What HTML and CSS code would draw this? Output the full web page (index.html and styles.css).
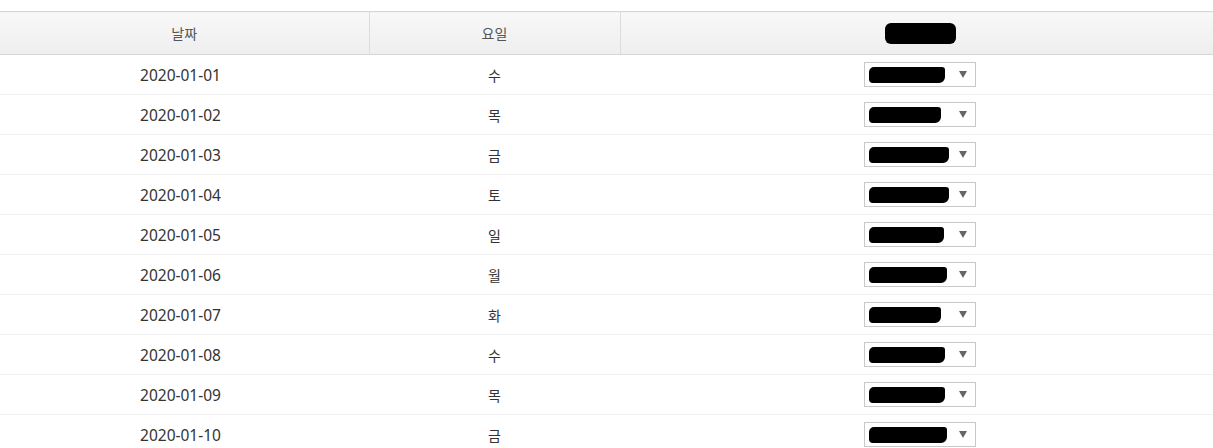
FILE: index.html
```html
<!DOCTYPE html>
<html lang="ko">
<head>
<meta charset="utf-8">
<link rel="stylesheet" href="styles.css">
</head>
<body>
<div class="wrap">
<table class="grid">
  <colgroup>
    <col class="c1"><col class="c2"><col class="c3">
  </colgroup>
  <thead>
    <tr>
      <th>날짜</th>
      <th>요일</th>
      <th><span class="redact head-redact"></span></th>
    </tr>
  </thead>
  <tbody>
    <tr><td class="date">2020-01-01</td><td>수</td><td><div class="sel"><span class="redact" style="width:76px"></span><span class="arrow"></span></div></td></tr>
    <tr><td class="date">2020-01-02</td><td>목</td><td><div class="sel"><span class="redact" style="width:72px"></span><span class="arrow"></span></div></td></tr>
    <tr><td class="date">2020-01-03</td><td>금</td><td><div class="sel"><span class="redact" style="width:80px"></span><span class="arrow"></span></div></td></tr>
    <tr><td class="date">2020-01-04</td><td>토</td><td><div class="sel"><span class="redact" style="width:80px"></span><span class="arrow"></span></div></td></tr>
    <tr><td class="date">2020-01-05</td><td>일</td><td><div class="sel"><span class="redact" style="width:75px"></span><span class="arrow"></span></div></td></tr>
    <tr><td class="date">2020-01-06</td><td>월</td><td><div class="sel"><span class="redact" style="width:78px"></span><span class="arrow"></span></div></td></tr>
    <tr><td class="date">2020-01-07</td><td>화</td><td><div class="sel"><span class="redact" style="width:72px"></span><span class="arrow"></span></div></td></tr>
    <tr><td class="date">2020-01-08</td><td>수</td><td><div class="sel"><span class="redact" style="width:76px"></span><span class="arrow"></span></div></td></tr>
    <tr><td class="date">2020-01-09</td><td>목</td><td><div class="sel"><span class="redact" style="width:76px"></span><span class="arrow"></span></div></td></tr>
    <tr><td class="date">2020-01-10</td><td>금</td><td><div class="sel"><span class="redact" style="width:78px"></span><span class="arrow"></span></div></td></tr>
  </tbody>
</table>
</div>
</body>
</html>
```
FILE: styles.css
```css
html, body {
  margin: 0;
  padding: 0;
  background: #fff;
  font-family: "Noto Sans", "Noto Sans CJK KR", sans-serif;
  color: #333;
}
.wrap {
  padding-top: 11px;
}
.grid {
  width: 1213px;
  border-collapse: collapse;
  table-layout: fixed;
  font-size: 14px;
}
.c1 { width: 369px; }
.c2 { width: 251px; }
.c3 { width: 593px; }
.grid th {
  height: 42px;
  padding: 0;
  font-weight: normal;
  color: #555;
  background: linear-gradient(#f8f8f8, #eeeeee);
  border-top: 1px solid #d6d6d6;
  border-bottom: 1px solid #d6d6d6;
  border-right: 1px solid #dcdcdc;
  text-align: center;
  vertical-align: middle;
}
.grid th:last-child {
  border-right: 1px solid #e6e6e6;
}
.grid td {
  height: 39px;
  padding: 0;
  text-align: center;
  vertical-align: middle;
  border-bottom: 1px solid #f0f0f0;
}
.grid td.date {
  font-size: 15.5px;
  padding-right: 8px;
}
.redact {
  display: inline-block;
  height: 16px;
  background: #000;
  border-radius: 5px 3px 6px 4px;
  vertical-align: middle;
}
.head-redact {
  width: 71px;
  height: 21px;
  border-radius: 6px;
  margin-left: 7px;
}
.sel {
  display: inline-flex;
  align-items: center;
  box-sizing: border-box;
  width: 112px;
  height: 25px;
  margin-left: 7px;
  padding: 0 8px 0 4px;
  border: 1px solid #c8c8c8;
  background: #fff;
  justify-content: space-between;
}
.arrow {
  width: 0;
  height: 0;
  border-left: 4px solid transparent;
  border-right: 4px solid transparent;
  border-top: 7px solid #666;
}
```
